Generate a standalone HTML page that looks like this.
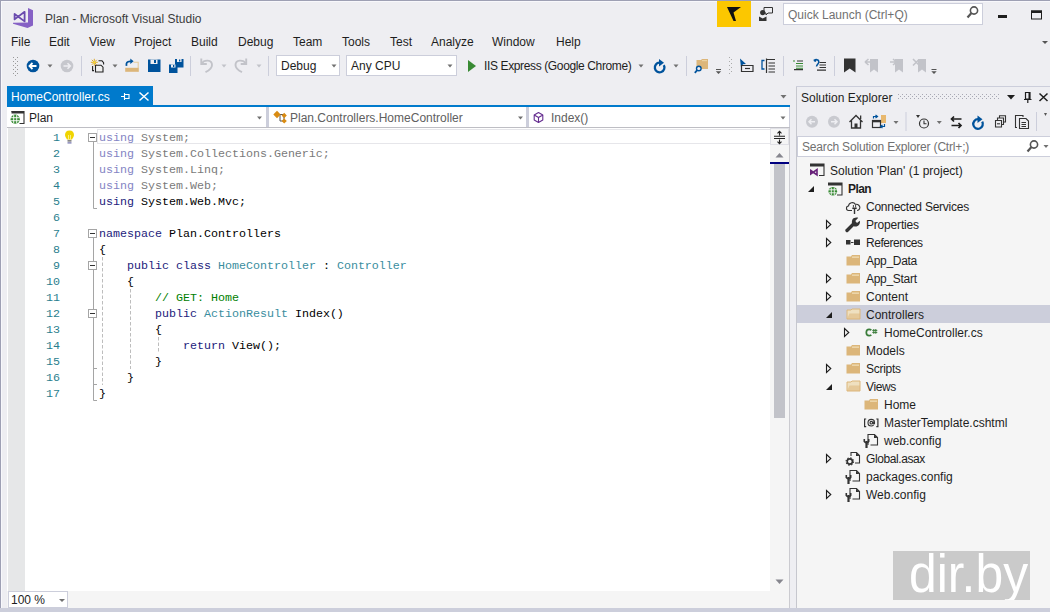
<!DOCTYPE html>
<html><head><meta charset="utf-8">
<style>
*{box-sizing:border-box;margin:0;padding:0}
html,body{width:1050px;height:612px;overflow:hidden;background:#EEEEF2}
body{position:relative;font-family:"Liberation Sans",sans-serif;font-size:12px;color:#1E1E1E}
.a{position:absolute;white-space:nowrap}
.mono{font-family:"Liberation Mono",monospace;font-size:11.67px}
svg{position:absolute;overflow:visible}
.ln{left:0;width:60px;text-align:right;font-family:"Liberation Mono",monospace;font-size:11.67px;line-height:16px;color:#2A7E8E;padding-top:1px}
.code{left:99px;font-family:"Liberation Mono",monospace;font-size:11.67px;line-height:16px;color:#000;padding-top:1px;white-space:pre}
.tr{line-height:18px;padding-top:1px}
.k{color:#1C1C7C}.fu{color:#8484C4}.fg{color:#7A7A7A}.t{color:#3A8D9E}.c{color:#008000}
</style></head><body>
<!-- window border -->
<div class="a" style="left:0;top:0;width:1050px;height:1px;background:#9EA0B4"></div>
<div class="a" style="left:0;top:0;width:1px;height:612px;background:#9EA0B4"></div>
<div class="a" style="left:1px;top:1px;width:1049px;height:1px;background:#F8F8FC"></div>
<div class="a" style="left:1px;top:1px;width:1px;height:611px;background:#F8F8FC"></div>

<!-- title -->
<div class="a" style="left:45px;top:11px;line-height:16px;color:#3C3C3C">Plan - Microsoft Visual Studio</div>

<!-- toolbar dropdowns -->
<div class="a" style="left:276px;top:55px;width:64px;height:21px;background:#fff;border:1px solid #CCCEDB"></div>
<div class="a" style="left:281px;top:58px;line-height:16px">Debug</div>
<div class="a" style="left:346px;top:55px;width:111px;height:21px;background:#fff;border:1px solid #CCCEDB"></div>
<div class="a" style="left:351px;top:58px;line-height:16px">Any CPU</div>
<div class="a" style="left:484px;top:58px;line-height:16px;letter-spacing:-0.37px">IIS Express (Google Chrome)</div>

<!-- title/toolbar icons -->
<svg style="left:0;top:0" width="1050" height="90">
 <!-- VS logo -->
 <polygon points="28,8 33,10.2 33,25.5 27.5,28 13,23.8 13,22.8 28,22.6" fill="#8661C5"/>
 <path d="M14.6 14 L24.6 21.4 L24.6 11.8 L14.6 19.4 Z" fill="none" stroke="#6A4BAE" stroke-width="1.8" stroke-linejoin="round"/>
 <!-- feedback yellow -->
 <rect x="717" y="1" width="34" height="26" fill="#FCC700"/>
 <polygon points="727,7 741,7 733.5,12.5 736,21 733.5,21" fill="#111"/>
 <!-- person feedback -->
 <circle cx="762.7" cy="12.6" r="2.6" fill="#333"/>
 <path d="M759 21 V16.5 L762.7 18.5 L766.5 16.5 V21 Z" fill="#333"/>
 <path d="M764 7.5 H772.5 V13 H768 L766 15 V13 H764 Z" fill="none" stroke="#333" stroke-width="1"/>
 <!-- quick launch box -->
 <rect x="783.5" y="3.5" width="199" height="21" fill="#fff" stroke="#CCCEDB"/>
 <circle cx="974" cy="10.5" r="3.6" fill="none" stroke="#555" stroke-width="1.6"/>
 <path d="M971.5 13 L967.5 17.5" stroke="#555" stroke-width="2.2"/>
 <!-- min / max -->
 <rect x="998" y="15" width="9" height="3" fill="#1E1E1E"/>
 <rect x="1031.5" y="11" width="10" height="8" fill="none" stroke="#1E1E1E" stroke-width="1"/>
 <rect x="1031" y="10.5" width="11" height="2.5" fill="#1E1E1E"/>
 <!-- overflow chevron right of menu -->
 <polygon points="1042,41 1048,41 1045,44" fill="#555"/>

 <!-- grip -->
 <g fill="#999">
  <rect x="13" y="57" width="1" height="1"/><rect x="13" y="61" width="1" height="1"/><rect x="13" y="65" width="1" height="1"/><rect x="13" y="69" width="1" height="1"/><rect x="13" y="73" width="1" height="1"/>
  <rect x="15" y="59" width="1" height="1"/><rect x="15" y="63" width="1" height="1"/><rect x="15" y="67" width="1" height="1"/><rect x="15" y="71" width="1" height="1"/><rect x="15" y="75" width="1" height="1"/>
  <rect x="17" y="57" width="1" height="1"/><rect x="17" y="61" width="1" height="1"/><rect x="17" y="65" width="1" height="1"/><rect x="17" y="69" width="1" height="1"/><rect x="17" y="73" width="1" height="1"/>
 </g>
 <!-- back -->
 <circle cx="33" cy="66" r="6.3" fill="#00539C"/>
 <path d="M36.5 66 H30 M32.5 63 L29.5 66 L32.5 69" fill="none" stroke="#fff" stroke-width="1.8"/>
 <polygon points="47.5,64.5 52.5,64.5 50,67.5" fill="#717171"/>
 <!-- forward gray -->
 <circle cx="67" cy="66" r="6.3" fill="#C6C7CD"/>
 <path d="M63.5 66 H70 M67.5 63.2 L70.3 66 L67.5 68.8" fill="none" stroke="#EEEEF2" stroke-width="1.6"/>
 <!-- separators -->
 <rect x="81" y="56" width="1" height="20" fill="#CCCEDB"/>
 <rect x="190" y="56" width="1" height="20" fill="#CCCEDB"/>
 <rect x="268" y="56" width="1" height="20" fill="#CCCEDB"/>
 <rect x="686" y="56" width="1" height="20" fill="#CCCEDB"/>
 <rect x="783" y="56" width="1" height="20" fill="#CCCEDB"/>
 <rect x="834" y="56" width="1" height="20" fill="#CCCEDB"/>
 <!-- new project -->
 <path d="M98.5 60.8 H102 L103.6 62.6 V64.5 M92.6 66 V70.6 H94" fill="none" stroke="#222" stroke-width="1.1"/>
 <path d="M95.5 65.2 H101 L103 67.2 V72 H95.5 Z" fill="#F0F0F0" stroke="#222" stroke-width="1.1"/>
 <g stroke="#D9A21B" stroke-width="0.9"><path d="M94.3 58.8 V65.8 M90.8 62.3 H97.8 M91.8 59.8 L96.8 64.8 M96.8 59.8 L91.8 64.8"/></g>
 <circle cx="94.3" cy="62.3" r="1.3" fill="#F2D43A"/>
 <polygon points="112.5,64.5 117.5,64.5 115,67.5" fill="#717171"/>
 <!-- open folder -->
 <path d="M133.5 62.3 H138.2 V71.7" fill="none" stroke="#E6CC9C" stroke-width="1.1"/>
 <path d="M125.2 67.8 H138.6 V71.8 H125.2 Z" fill="#DCB67A"/>
 <path d="M126.5 65.8 C126 63 127 61.3 130 61.3 H131" fill="none" stroke="#00539C" stroke-width="1.8"/>
 <polygon points="130.3,58.6 133.6,61.3 130.3,64" fill="#00539C"/>
 <!-- save -->
 <path d="M148 59.5 H160.5 V72 H148 Z" fill="#00539C"/>
 <rect x="150.5" y="59.5" width="7" height="4.5" fill="#EEEEF2"/>
 <rect x="154" y="60" width="2" height="3" fill="#00539C"/>
 <!-- save all -->
 <path d="M175 59 H183.5 V67.5 H175 Z" fill="#00539C"/>
 <rect x="177" y="59" width="4.5" height="3" fill="#EEEEF2"/><rect x="179" y="59.5" width="1.3" height="2" fill="#00539C"/>
 <path d="M169 64.5 H177.5 V73 H169 Z" fill="#00539C"/>
 <rect x="171" y="64.5" width="4.5" height="3" fill="#EEEEF2"/><rect x="173" y="65" width="1.3" height="2" fill="#00539C"/>
 <!-- undo gray -->
 <path d="M201.3 58.5 V64 H206.8" fill="none" stroke="#C2C3C9" stroke-width="1.9"/>
 <path d="M201.8 63.5 C204 59.5 212 59.3 212 65 C212 68 209.5 70.3 205.5 72.2" fill="none" stroke="#C2C3C9" stroke-width="1.9"/>
 <polygon points="221.5,64.5 226.5,64.5 224,67.5" fill="#C2C3C9"/>
 <path d="M246.2 58.5 V64 H240.7" fill="none" stroke="#C2C3C9" stroke-width="1.9"/>
 <path d="M245.7 63.5 C243.5 59.5 235.5 59.3 235.5 65 C235.5 68 238 70.3 242 72.2" fill="none" stroke="#C2C3C9" stroke-width="1.9"/>
 <polygon points="256.5,64.5 261.5,64.5 259,67.5" fill="#C2C3C9"/>
 <!-- dropdown arrows in combos -->
 <polygon points="331.5,64.5 336.5,64.5 334,67.5" fill="#717171"/>
 <polygon points="447.5,64.5 452.5,64.5 450,67.5" fill="#717171"/>
 <!-- play -->
 <polygon points="468,60 476,66 468,72" fill="#388A34"/>
 <polygon points="638.5,64.5 643.5,64.5 641,67.5" fill="#717171"/>
 <!-- refresh -->
 <path d="M663.8 65.1 A4.8 4.8 0 1 1 659.5 62.7" fill="none" stroke="#00539C" stroke-width="2.3"/>
 <polygon points="659,59 664,62.7 659,66.4" fill="#00539C"/>
 <polygon points="673.5,64.5 678.5,64.5 676,67.5" fill="#717171"/>
 <!-- find in files -->
 <path d="M696.5 60 H701 L702 59 H708 V69 H696.5 Z" fill="#DCB67A"/>
 <rect x="702" y="60" width="5" height="1.2" fill="#EBD3A3"/>
 <circle cx="698.8" cy="68.5" r="2.3" fill="#EEEEF2" stroke="#00539C" stroke-width="1.4"/>
 <path d="M697.2 70.2 L694.8 72.8" stroke="#00539C" stroke-width="1.8"/>
 <rect x="716" y="69" width="5" height="1" fill="#555"/>
 <polygon points="715.8,71.2 721.2,71.2 718.5,74" fill="#555"/>
 <g fill="#AAA"><rect x="729" y="57" width="1" height="1"/><rect x="729" y="61" width="1" height="1"/><rect x="729" y="65" width="1" height="1"/><rect x="729" y="69" width="1" height="1"/><rect x="729" y="73" width="1" height="1"/><rect x="731" y="59" width="1" height="1"/><rect x="731" y="63" width="1" height="1"/><rect x="731" y="67" width="1" height="1"/><rect x="731" y="71" width="1" height="1"/></g>
 <!-- icon: select -->
 <polygon points="740,58.5 746,64 743,64.3 741,67.5" fill="#00539C"/>
 <path d="M741.5 65 V72 M741.5 65.5 H753 V71.5 H741.5" fill="none" stroke="#333" stroke-width="1.2"/>
 <path d="M745 68.5 H750" stroke="#333" stroke-width="1.2"/>
 <!-- icon 2 -->
 <path d="M764.5 60.5 H762 V69 H764.5" fill="none" stroke="#00539C" stroke-width="1.3"/>
 <path d="M766.5 58.5 V73 M766.5 59.5 H775 M768.5 63 H775 M768.5 66 H775 M768.5 69 H775 M768.5 72 H775" fill="none" stroke="#333" stroke-width="1.2"/>
 <!-- green lines -->
 <path d="M793 61 H795" stroke="#388A34" stroke-width="1.2"/>
 <path d="M797 61 H803 M794 69.7 H803" stroke="#333" stroke-width="1.2"/>
 <path d="M796 63.5 H803 M796 66 H803 M796 68.2 H803" stroke="#388A34" stroke-width="1.1"/>
 <!-- uncomment -->
 <path d="M814.5 61.5 C815 59 818.8 59 818.8 62 C818.8 64 816.8 64.5 816.5 66.5" fill="none" stroke="#00539C" stroke-width="1.5"/>
 <polygon points="813,60 816.5,58.5 816,62" fill="#00539C"/>
 <path d="M819.5 62.5 H826 M819.5 65 H826 M819.5 67.5 H826 M817 70.2 H826" stroke="#333" stroke-width="1.2"/>
 <!-- bookmark -->
 <polygon points="844,58.5 855.5,58.5 855.5,72.5 849.7,68.5 844,72.5" fill="#333"/>
 <!-- gray bookmark nav -->
 <g fill="#C2C3C9">
  <polygon points="870,59 878,59 878,72.5 874,69.5 870,72.5"/>
  <polygon points="895,59 903,59 903,72.5 899,69.5 895,72.5"/>
  <polygon points="918,59 926,59 926,72.5 922,69.5 918,72.5"/>
 </g>
 <g stroke="#C2C3C9" stroke-width="1.6" fill="none">
  <path d="M865 62 L868.5 59 M865 62 L868.5 65 M865 62 H871"/>
  <path d="M890 62 H896 M893 59 L896.5 62 L893 65"/>
  <path d="M913 59 L919 65 M919 59.5 L913 65.5"/>
 </g>
 <rect x="931.5" y="69" width="5" height="1" fill="#555"/>
 <polygon points="931.3,71.2 936.7,71.2 934,74" fill="#555"/>
</svg>

<div class="a" style="left:788px;top:7px;line-height:16px;color:#717171">Quick Launch (Ctrl+Q)</div>
<!-- menu -->
<div class="a" style="left:11px;top:34px;line-height:16px">File</div>
<div class="a" style="left:49px;top:34px;line-height:16px">Edit</div>
<div class="a" style="left:89px;top:34px;line-height:16px">View</div>
<div class="a" style="left:134px;top:34px;line-height:16px">Project</div>
<div class="a" style="left:191px;top:34px;line-height:16px">Build</div>
<div class="a" style="left:238px;top:34px;line-height:16px">Debug</div>
<div class="a" style="left:293px;top:34px;line-height:16px">Team</div>
<div class="a" style="left:342px;top:34px;line-height:16px">Tools</div>
<div class="a" style="left:390px;top:34px;line-height:16px">Test</div>
<div class="a" style="left:431px;top:34px;line-height:16px">Analyze</div>
<div class="a" style="left:492px;top:34px;line-height:16px">Window</div>
<div class="a" style="left:556px;top:34px;line-height:16px">Help</div>

<!-- tab -->
<div class="a" style="left:7px;top:86px;width:146px;height:21px;background:#007ACC"></div>
<div class="a" style="left:11px;top:89px;line-height:16px;color:#fff">HomeController.cs</div>
<div class="a" style="left:7px;top:105px;width:783px;height:2px;background:#007ACC"></div>

<!-- nav bar -->
<div class="a" style="left:7px;top:107px;width:783px;height:21px;background:#CCCEDB"></div>
<div class="a" style="left:7px;top:127px;width:783px;height:1px;background:#BEBEC4"></div>
<div class="a" style="left:7px;top:107px;width:259px;height:20px;background:#fff"></div>
<div class="a" style="left:269px;top:107px;width:257px;height:20px;background:#fff"></div>
<div class="a" style="left:529px;top:107px;width:260px;height:20px;background:#fff"></div>
<div class="a" style="left:29px;top:110px;line-height:16px">Plan</div>
<div class="a" style="left:290px;top:110px;line-height:16px;color:#606060">Plan.Controllers.HomeController</div>
<div class="a" style="left:551px;top:110px;line-height:16px;color:#606060">Index()</div>

<!-- editor -->
<div class="a" style="left:7px;top:128px;width:763px;height:463px;background:#fff"></div>
<div class="a" style="left:8px;top:128px;width:17px;height:463px;background:#E6E7E8"></div>

<!-- code -->
<svg style="left:0;top:0" width="1050" height="612">
<path d="M93.5 142 V208.5 H97" fill="none" stroke="#A5A5A5" stroke-width="1"/>
<path d="M93.5 238 V400.5 H97" fill="none" stroke="#A5A5A5" stroke-width="1"/>
<path d="M93.5 384.5 H97 M93.5 368.5 H97" fill="none" stroke="#A5A5A5" stroke-width="1"/>
<rect x="88.5" y="133.5" width="8" height="8" fill="#fff" stroke="#A5A5A5"/>
<path d="M90 137.5 H95" stroke="#333" stroke-width="1"/>
<rect x="88.5" y="229.5" width="8" height="8" fill="#fff" stroke="#A5A5A5"/>
<path d="M90 233.5 H95" stroke="#333" stroke-width="1"/>
<rect x="88.5" y="261.5" width="8" height="8" fill="#fff" stroke="#A5A5A5"/>
<path d="M90 265.5 H95" stroke="#333" stroke-width="1"/>
<rect x="88.5" y="309.5" width="8" height="8" fill="#fff" stroke="#A5A5A5"/>
<path d="M90 313.5 H95" stroke="#333" stroke-width="1"/>
<path d="M102.5 257 V385" stroke="#BDBDBD" stroke-dasharray="3.5 2" stroke-width="1"/>
<path d="M130.5 289 V369" stroke="#BDBDBD" stroke-dasharray="3.5 2" stroke-width="1"/>
<path d="M158.5 337 V353" stroke="#BDBDBD" stroke-dasharray="3.5 2" stroke-width="1"/>
<rect x="97.5" y="129.5" width="675" height="14" fill="none" stroke="#E6E6EA"/>
</svg>
<div class="a ln" style="top:129px">1</div>
<div class="a code" style="top:129px"><span class="fu">using</span> <span class="fg">System;</span></div>
<div class="a ln" style="top:145px">2</div>
<div class="a code" style="top:145px"><span class="fu">using</span> <span class="fg">System.Collections.Generic;</span></div>
<div class="a ln" style="top:161px">3</div>
<div class="a code" style="top:161px"><span class="fu">using</span> <span class="fg">System.Linq;</span></div>
<div class="a ln" style="top:177px">4</div>
<div class="a code" style="top:177px"><span class="fu">using</span> <span class="fg">System.Web;</span></div>
<div class="a ln" style="top:193px">5</div>
<div class="a code" style="top:193px"><span class="k">using</span> System.Web.Mvc;</div>
<div class="a ln" style="top:209px">6</div>
<div class="a ln" style="top:225px">7</div>
<div class="a code" style="top:225px"><span class="k">namespace</span> Plan.Controllers</div>
<div class="a ln" style="top:241px">8</div>
<div class="a code" style="top:241px">{</div>
<div class="a ln" style="top:257px">9</div>
<div class="a code" style="top:257px">    <span class="k">public</span> <span class="k">class</span> <span class="t">HomeController</span> : <span class="t">Controller</span></div>
<div class="a ln" style="top:273px">10</div>
<div class="a code" style="top:273px">    {</div>
<div class="a ln" style="top:289px">11</div>
<div class="a code" style="top:289px">        <span class="c">// GET: Home</span></div>
<div class="a ln" style="top:305px">12</div>
<div class="a code" style="top:305px">        <span class="k">public</span> <span class="t">ActionResult</span> Index()</div>
<div class="a ln" style="top:321px">13</div>
<div class="a code" style="top:321px">        {</div>
<div class="a ln" style="top:337px">14</div>
<div class="a code" style="top:337px">            <span class="k">return</span> View();</div>
<div class="a ln" style="top:353px">15</div>
<div class="a code" style="top:353px">        }</div>
<div class="a ln" style="top:369px">16</div>
<div class="a code" style="top:369px">    }</div>
<div class="a ln" style="top:385px">17</div>
<div class="a code" style="top:385px">}</div>

<!-- bottom status -->
<div class="a" style="left:7px;top:591px;width:783px;height:17px;background:#F5F5F5"></div>
<div class="a" style="left:0;top:608px;width:1050px;height:4px;background:#CCCEDB"></div>

<!-- scrollbar -->
<div class="a" style="left:770px;top:128px;width:19px;height:463px;background:#F5F5F5"></div>

<!-- splitter -->
<div class="a" style="left:789px;top:128px;width:1px;height:480px;background:#CBCBD0"></div>
<div class="a" style="left:796px;top:86px;width:1px;height:522px;background:#C6C7CE"></div>
<div class="a" style="left:796px;top:86px;width:254px;height:1px;background:#CCCEDB"></div>

<!-- solution explorer -->
<div class="a" style="left:797px;top:87px;width:253px;height:521px;background:#F5F5F5"></div>
<div class="a" style="left:797px;top:87px;width:253px;height:20px;background:#EEEEF2"></div>
<div class="a" style="left:801px;top:90px;line-height:16px">Solution Explorer</div>
<div class="a" style="left:797px;top:107px;width:253px;height:29px;background:#EEEEF2"></div>
<div class="a" style="left:797px;top:136px;width:256px;height:21px;background:#fff;border:1px solid #CCCEDB"></div>
<div class="a" style="left:802px;top:139px;line-height:16px;color:#717171;letter-spacing:-0.18px">Search Solution Explorer (Ctrl+;)</div>

<div class="a" style="left:797px;top:305px;width:253px;height:18px;background:#CCCEDB"></div>
<div class="a tr" style="left:830px;top:161px">Solution 'Plan' (1 project)</div>
<div class="a tr" style="left:848px;top:179px;font-weight:bold;letter-spacing:-0.6px">Plan</div>
<div class="a tr" style="left:866px;top:197px;letter-spacing:-0.25px">Connected Services</div>
<div class="a tr" style="left:866px;top:215px;letter-spacing:-0.19px">Properties</div>
<div class="a tr" style="left:866px;top:233px;letter-spacing:-0.48px">References</div>
<div class="a tr" style="left:866px;top:251px;letter-spacing:-0.3px">App_Data</div>
<div class="a tr" style="left:866px;top:269px;letter-spacing:-0.3px">App_Start</div>
<div class="a tr" style="left:866px;top:287px">Content</div>
<div class="a tr" style="left:866px;top:305px">Controllers</div>
<div class="a tr" style="left:884px;top:323px">HomeController.cs</div>
<div class="a tr" style="left:866px;top:341px">Models</div>
<div class="a tr" style="left:866px;top:359px;letter-spacing:-0.28px">Scripts</div>
<div class="a tr" style="left:866px;top:377px;letter-spacing:-0.4px">Views</div>
<div class="a tr" style="left:884px;top:395px">Home</div>
<div class="a tr" style="left:884px;top:413px">MasterTemplate.cshtml</div>
<div class="a tr" style="left:884px;top:431px">web.config</div>
<div class="a tr" style="left:866px;top:449px;letter-spacing:-0.4px">Global.asax</div>
<div class="a tr" style="left:866px;top:467px">packages.config</div>
<div class="a tr" style="left:866px;top:485px">Web.config</div>
<svg style="left:0;top:0" width="1050" height="612">
<path d="M810 164 H824 V175.5 H819" fill="none" stroke="#333" stroke-width="1.1"/>
<rect x="810" y="164" width="14" height="2.5" fill="#333"/>
<path d="M810.8 170.5 L817 175 V169.5 L810.8 174 Z" fill="none" stroke="#68217A" stroke-width="1.6"/>
<polygon points="814,186 814,192 808,192" fill="#1E1E1E"/>
<path d="M828 183 H842 V195 H837" fill="none" stroke="#333" stroke-width="1.1"/>
<rect x="828" y="183" width="14" height="2.5" fill="#333"/>
<circle cx="832.8" cy="191.3" r="4.3" fill="#388A34"/>
<path d="M831.3 187.5 V195 M834.3 187.5 V195 M829 189.8 H836.6 M829 192.8 H836.6" stroke="#F5F5F5" stroke-width="0.9"/>
<path d="M852 210.5 H848.5 C845.8 210.5 845.8 206 848.5 206 C848.8 202.3 853.8 201.5 855.3 204.3 C858.3 203.8 860.8 206.5 859.6 208.8 C859.1 210 858.2 210.5 857 210.5" fill="none" stroke="#333" stroke-width="1.1"/>
<path d="M854.5 209 V214" stroke="#333" stroke-width="1.4"/>
<path d="M852.3 208.3 H856.7" stroke="#333" stroke-width="1.5"/>
<path d="M853.4 205 V207.5 M855.6 205 V207.5" stroke="#333" stroke-width="0.9"/>
<path d="M826.5 220.5 L830.8 224.5 L826.5 228.5 Z" fill="none" stroke="#1E1E1E" stroke-width="1.1"/>
<path d="M847 230.5 L853.5 224" stroke="#333" stroke-width="3.4" stroke-linecap="round"/>
<path d="M853.5 218.2 C856.5 216.8 859.5 217.8 857.5 218.5 L855.3 221 L857 223 L859.8 220.8 C860.8 224 858 227.3 854.5 226.5 C851.5 226 851 220 853.5 218.2 Z" fill="#333"/>
<path d="M826.5 238.5 L830.8 242.5 L826.5 246.5 Z" fill="none" stroke="#1E1E1E" stroke-width="1.1"/>
<rect x="846" y="240" width="4.5" height="4.5" fill="#333"/>
<rect x="851" y="242" width="2.5" height="1" fill="#333"/>
<rect x="854" y="239.5" width="6" height="5.5" fill="#333"/>
<path d="M846.5 256.5 H851 L852 255 H860 V265.5 H846.5 Z" fill="#DCB67A"/>
<rect x="852" y="256.5" width="7" height="1.3" fill="#F0DDB5"/>
<path d="M826.5 274.5 L830.8 278.5 L826.5 282.5 Z" fill="none" stroke="#1E1E1E" stroke-width="1.1"/>
<path d="M846.5 274.5 H851 L852 273 H860 V283.5 H846.5 Z" fill="#DCB67A"/>
<rect x="852" y="274.5" width="7" height="1.3" fill="#F0DDB5"/>
<path d="M826.5 292.5 L830.8 296.5 L826.5 300.5 Z" fill="none" stroke="#1E1E1E" stroke-width="1.1"/>
<path d="M846.5 292.5 H851 L852 291 H860 V301.5 H846.5 Z" fill="#DCB67A"/>
<rect x="852" y="292.5" width="7" height="1.3" fill="#F0DDB5"/>
<polygon points="832,312 832,318 826,318" fill="#1E1E1E"/>
<path d="M847 310 H851 L852 309 H860 V319 H847 Z" fill="#EFE0C0" stroke="#DCB67A" stroke-width="1"/>
<path d="M847 319 L849.5 313.5 H860 V319 Z" fill="#DCB67A" opacity="0.55"/>
<path d="M844.5 328.5 L848.8 332.5 L844.5 336.5 Z" fill="none" stroke="#1E1E1E" stroke-width="1.1"/>
<path d="M871.3 330.2 C870.6 329.5 869.9 329.3 869.1 329.3 C867.3 329.3 866.3 330.7 866.3 332.5 C866.3 334.4 867.4 335.7 869.1 335.7 C869.9 335.7 870.6 335.5 871.3 334.8" fill="none" stroke="#3A7D3A" stroke-width="1.7"/>
<path d="M873.8 329 V333.8 M875.8 329 V333.8 M872.3 330.4 H877.3 M872.3 332.4 H877.3" stroke="#3A7D3A" stroke-width="1"/>
<path d="M846.5 346.5 H851 L852 345 H860 V355.5 H846.5 Z" fill="#DCB67A"/>
<rect x="852" y="346.5" width="7" height="1.3" fill="#F0DDB5"/>
<path d="M826.5 364.5 L830.8 368.5 L826.5 372.5 Z" fill="none" stroke="#1E1E1E" stroke-width="1.1"/>
<path d="M846.5 364.5 H851 L852 363 H860 V373.5 H846.5 Z" fill="#DCB67A"/>
<rect x="852" y="364.5" width="7" height="1.3" fill="#F0DDB5"/>
<polygon points="832,384 832,390 826,390" fill="#1E1E1E"/>
<path d="M847 382 H851 L852 381 H860 V391 H847 Z" fill="#EFE0C0" stroke="#DCB67A" stroke-width="1"/>
<path d="M847 391 L849.5 385.5 H860 V391 Z" fill="#DCB67A" opacity="0.55"/>
<path d="M864.5 400.5 H869 L870 399 H878 V409.5 H864.5 Z" fill="#DCB67A"/>
<rect x="870" y="400.5" width="7" height="1.3" fill="#F0DDB5"/>
<path d="M866.2 419 H864.6 V426.6 H866.2 M876.3 419 H877.9 V426.6 H876.3" fill="none" stroke="#333" stroke-width="1.2"/>
<path d="M873.6 425.3 C872.9 425.8 872.2 426 871.3 426 C869.4 426 868 424.6 868 422.7 C868 420.8 869.4 419.4 871.3 419.4 C873.2 419.4 874.5 420.6 874.5 422.4 V423.5 C874.5 424.2 873.3 424.2 873.3 423.5 V421.5" fill="none" stroke="#333" stroke-width="1.1"/>
<circle cx="871.3" cy="422.7" r="1.3" fill="none" stroke="#333" stroke-width="1.1"/>
<path d="M868 445 V434.5 H874.5 L877.5 437.5 V445 H870.5" fill="none" stroke="#333" stroke-width="1.1"/>
<path d="M874 434.5 V438 H877.5 Z" fill="#333"/>
<path d="M866.5 441 V448" stroke="#333" stroke-width="2.2"/>
<path d="M864.3 439 V441.5 Q866.5 444 868.7 441.5 V439" fill="none" stroke="#333" stroke-width="1.6"/>
<path d="M826.5 454.5 L830.8 458.5 L826.5 462.5 Z" fill="none" stroke="#1E1E1E" stroke-width="1.1"/>
<path d="M851 456 V452.5 H856.5 L859.5 455.5 V463 H855" fill="none" stroke="#333" stroke-width="1.1"/>
<path d="M856 452.5 V456 H859.5 Z" fill="#333"/>
<circle cx="849.8" cy="461.5" r="2.6" fill="none" stroke="#333" stroke-width="1.6"/>
<circle cx="849.8" cy="461.5" r="3.7" fill="none" stroke="#333" stroke-width="1.2" stroke-dasharray="1.4 1.5"/>
<path d="M850 481 V470.5 H856.5 L859.5 473.5 V481 H852.5" fill="none" stroke="#333" stroke-width="1.1"/>
<path d="M856 470.5 V474 H859.5 Z" fill="#333"/>
<path d="M848.5 477 V484" stroke="#333" stroke-width="2.2"/>
<path d="M846.3 475 V477.5 Q848.5 480 850.7 477.5 V475" fill="none" stroke="#333" stroke-width="1.6"/>
<path d="M826.5 490.5 L830.8 494.5 L826.5 498.5 Z" fill="none" stroke="#1E1E1E" stroke-width="1.1"/>
<path d="M850 499 V488.5 H856.5 L859.5 491.5 V499 H852.5" fill="none" stroke="#333" stroke-width="1.1"/>
<path d="M856 488.5 V492 H859.5 Z" fill="#333"/>
<path d="M848.5 495 V502" stroke="#333" stroke-width="2.2"/>
<path d="M846.3 493 V495.5 Q848.5 498 850.7 495.5 V493" fill="none" stroke="#333" stroke-width="1.6"/>
</svg>
<svg style="left:0;top:0" width="1050" height="120"><defs><pattern id="dots" width="4" height="4" patternUnits="userSpaceOnUse"><rect x="0" y="0" width="1" height="1" fill="#A8A8B4"/><rect x="2" y="2" width="1" height="1" fill="#A8A8B4"/></pattern></defs><rect x="898" y="94" width="102" height="6" fill="url(#dots)"/></svg>
<!-- tab icons -->
<svg style="left:0;top:0" width="1050" height="612">
 <path d="M121 96.5 H124.5 M124.5 93 V100 M125 94.5 H129 V98.5 H125" fill="none" stroke="#fff" stroke-width="1.1"/>
 <path d="M139.5 92.5 L148.5 100.5 M148.5 92.5 L139.5 100.5" stroke="#fff" stroke-width="1.5"/>
 <polygon points="780.5,95 786.5,95 783.5,98.5" fill="#717171"/>
 <!-- nav dropdown arrows -->
 <polygon points="257,116.5 262,116.5 259.5,119.5" fill="#717171"/>
 <polygon points="518,116.5 523,116.5 520.5,119.5" fill="#717171"/>
 <polygon points="780.5,116.5 785.5,116.5 783,119.5" fill="#717171"/>
 <!-- project icon in nav -->
 <path d="M11.5 111.5 H24 V123.5 H19.5" fill="none" stroke="#333" stroke-width="1.1"/>
 <rect x="11.5" y="111" width="12.5" height="2.5" fill="#333"/>
 <circle cx="15.2" cy="119.2" r="4.6" fill="#3C8C38"/>
 <path d="M13.7 115 V123.5 M16.7 115 V123.5 M10.8 117.7 H19.6 M10.8 120.7 H19.6" stroke="#fff" stroke-width="0.9"/>
 <!-- class icon -->
 <path d="M277 114.5 H284 V121 M280 114.5 V121 H284" fill="none" stroke="#555" stroke-width="1"/>
 <polygon points="277,110.8 280.7,114.5 277,118.2 273.3,114.5" fill="#D98B12"/>
 <polygon points="284.2,112.8 286.8,115.5 284.2,118.2 281.6,115.5" fill="#D98B12"/>
 <polygon points="284.2,118.4 286.8,121 284.2,123.6 281.6,121" fill="#D98B12"/>
 <!-- method cube -->
 <path d="M538.5 112.5 L542.8 115 V120 L538.5 122.5 L534.2 120 V115 Z M534.2 115 L538.5 117.5 L542.8 115 M538.5 117.5 V122.5" fill="none" stroke="#652D90" stroke-width="1.1" stroke-linejoin="round"/>
 <!-- lightbulb -->
 <path d="M69.5 130.5 C66.5 130.5 65 132.5 65 135 C65 137 66.5 138 67 139.5 H72 C72.5 138 74 137 74 135 C74 132.5 72.5 130.5 69.5 130.5 Z" fill="#F0D400"/>
 <path d="M68.5 135 V139 M70.5 135 V139" stroke="#FFF6A0" stroke-width="0.8"/>
 <rect x="67.5" y="140.3" width="4" height="1.2" fill="#555"/>
 <rect x="67.5" y="142.3" width="4" height="1.2" fill="#6E6EAA"/>
 <!-- scrollbar -->
 <rect x="770.5" y="128.5" width="18" height="16" fill="#F5F5F5" stroke="#E0E0E6"/>
 <path d="M774 136.3 H785 M774 138.5 H785 M779.5 131.5 V135.5 M779.5 139.5 V143.5 M777.5 133.3 L779.5 131.3 L781.5 133.3 M777.5 141.7 L779.5 143.7 L781.5 141.7" fill="none" stroke="#222" stroke-width="1.1"/>
 <polygon points="775.5,157.5 783.5,157.5 779.5,153" fill="#86868E"/>
 <rect x="770" y="162" width="19" height="2" fill="#000080"/>
 <rect x="774" y="164" width="11" height="254" fill="#C2C3C9"/>
 <polygon points="775.5,579.5 783.5,579.5 779.5,584" fill="#86868E"/>
 <!-- SE header -->
 <polygon points="1007,95 1015,95 1011,99.5" fill="#1E1E1E"/>
 <path d="M1025.5 92.5 H1030 V99 H1025.5 Z M1024 99.5 H1031.5 M1027.8 99.5 V103" fill="none" stroke="#1E1E1E" stroke-width="1.2"/>
 <rect x="1028.5" y="92.5" width="1.5" height="6.5" fill="#1E1E1E"/>
 <path d="M1039.5 93.5 L1047.5 101 M1047.5 93.5 L1039.5 101" stroke="#1E1E1E" stroke-width="1.5"/>
 <!-- SE toolbar -->
 <circle cx="812" cy="121.7" r="6" fill="#C9CAD0"/>
 <path d="M815 121.7 H809.5 M811.5 119.2 L809 121.7 L811.5 124.2" fill="none" stroke="#EEEEF2" stroke-width="1.5"/>
 <circle cx="834" cy="121.7" r="6" fill="#C9CAD0"/>
 <path d="M831 121.7 H836.5 M834.5 119.2 L837 121.7 L834.5 124.2" fill="none" stroke="#EEEEF2" stroke-width="1.5"/>
 <path d="M849.5 122 L856 115.5 L862.5 122 M851.5 120.5 V128 H860.5 V120.5" fill="none" stroke="#333" stroke-width="1.3"/>
 <rect x="854.5" y="123.5" width="3" height="4.5" fill="#333"/>
 <rect x="860" y="115.5" width="1.3" height="3.5" fill="#333"/>
 <rect x="881" y="115" width="5" height="8" fill="#E8B86E"/>
 <rect x="872.5" y="120.5" width="8" height="7" fill="none" stroke="#333" stroke-width="1.2"/>
 <rect x="872.5" y="120.5" width="8" height="1.8" fill="#333"/>
 <path d="M873.5 118.5 V116.5 H877 M875.5 115 L877.5 116.5 L875.5 118 M884.5 124 V126.5 H881 M882.5 125 L880.5 126.5 L882.5 128" fill="none" stroke="#00539C" stroke-width="1.2"/>
 <polygon points="893.5,121 898.5,121 896,124" fill="#717171"/>
 <rect x="905.5" y="112" width="1" height="19" fill="#CCCEDB"/>
 <polygon points="916,115 920,115 918,118" fill="#333"/>
 <circle cx="924" cy="123.5" r="4.5" fill="none" stroke="#333" stroke-width="1.2"/>
 <path d="M924 120.5 V123.8 H926.5" fill="none" stroke="#333" stroke-width="1.1"/>
 <polygon points="936.8,121 941.8,121 939.3,124" fill="#717171"/>
 <path d="M952 119 H961.5 M954 116.5 L951.5 119 L954 121.5 M951.5 125.5 H961 M958.5 123 L961 125.5 L958.5 128" fill="none" stroke="#1E1E1E" stroke-width="1.7"/>
 <path d="M982.2 121.6 A4.8 4.8 0 1 1 978 119.2" fill="none" stroke="#00539C" stroke-width="2.3"/>
 <polygon points="977.5,115.5 982.5,119.2 977.5,122.9" fill="#00539C"/>
 <path d="M995.5 120.5 H1001.5 V127 H995.5 Z M997.5 120.5 V118 H1003.5 V124.5 H1001.5 M999.5 118 V115.8 H1005.5 V122 H1003.5" fill="none" stroke="#333" stroke-width="1.1"/>
 <path d="M997 123.8 H1000" stroke="#333" stroke-width="1.1"/>
 <path d="M1017 127.5 H1015.5 V115.5 H1023 V117 M1019.5 118.5 H1026 L1028.5 121 V128.5 H1019.5 Z M1021.5 122.5 H1026 M1021.5 124.5 H1026 M1021.5 126.5 H1026" fill="none" stroke="#333" stroke-width="1.1"/>
 <rect x="1036" y="112" width="1" height="19" fill="#CCCEDB"/>
 <polygon points="1044,113 1047,113 1045.5,116" fill="#555"/>
 <!-- SE search icon -->
 <circle cx="1034" cy="144.5" r="3.6" fill="none" stroke="#555" stroke-width="1.6"/>
 <path d="M1031.5 147 L1027.5 151.5" stroke="#555" stroke-width="2.2"/>
 <polygon points="1043.5,145 1048.5,145 1046,148" fill="#717171"/>
 <!-- zoom combo -->
 <rect x="8.5" y="591.5" width="59" height="16" fill="#fff" stroke="#CCCEDB"/>
 <polygon points="59,599 65,599 62,602" fill="#717171"/>
</svg>
<div class="a" style="left:11px;top:592px;line-height:16px">100 %</div>

<!-- watermark -->
<div class="a" style="left:893px;top:551px;width:137px;height:49px;background:#CACACA;overflow:hidden"><div style="position:absolute;left:16px;top:-12px;font-size:53px;line-height:70px;color:#fff;transform:scaleX(0.94);transform-origin:0 0;white-space:nowrap">dir.by</div></div>

</body></html>
